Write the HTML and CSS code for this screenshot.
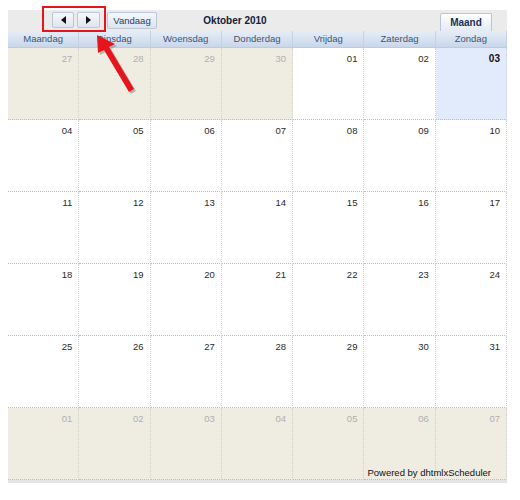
FILE: index.html
```html
<!DOCTYPE html>
<html>
<head>
<meta charset="utf-8">
<link rel="stylesheet" href="styles.css">
</head>
<body>
<div class="scheduler">
  <div class="navline">
    <div class="nav-btn prev"><span class="tri tri-left"></span></div>
    <div class="nav-btn next"><span class="tri tri-right"></span></div>
    <div class="today-btn">Vandaag</div>
    <div class="cal-date">Oktober 2010</div>
    <div class="tab">Maand</div>
  </div>
  <div class="header">
    <div class="hcell">Maandag</div>
    <div class="hcell">Dinsdag</div>
    <div class="hcell">Woensdag</div>
    <div class="hcell">Donderdag</div>
    <div class="hcell">Vrijdag</div>
    <div class="hcell">Zaterdag</div>
    <div class="hcell">Zondag</div>
  </div>
  <div class="month">
    <div class="cell other">27</div>
    <div class="cell other">28</div>
    <div class="cell other">29</div>
    <div class="cell other">30</div>
    <div class="cell">01</div>
    <div class="cell">02</div>
    <div class="cell now">03</div>

    <div class="cell">04</div>
    <div class="cell">05</div>
    <div class="cell">06</div>
    <div class="cell">07</div>
    <div class="cell">08</div>
    <div class="cell">09</div>
    <div class="cell">10</div>

    <div class="cell">11</div>
    <div class="cell">12</div>
    <div class="cell">13</div>
    <div class="cell">14</div>
    <div class="cell">15</div>
    <div class="cell">16</div>
    <div class="cell">17</div>

    <div class="cell">18</div>
    <div class="cell">19</div>
    <div class="cell">20</div>
    <div class="cell">21</div>
    <div class="cell">22</div>
    <div class="cell">23</div>
    <div class="cell">24</div>

    <div class="cell">25</div>
    <div class="cell">26</div>
    <div class="cell">27</div>
    <div class="cell">28</div>
    <div class="cell">29</div>
    <div class="cell">30</div>
    <div class="cell">31</div>

    <div class="cell other">01</div>
    <div class="cell other">02</div>
    <div class="cell other">03</div>
    <div class="cell other">04</div>
    <div class="cell other">05</div>
    <div class="cell other">06</div>
    <div class="cell other">07</div>
  </div>
  <div class="bottom-strip"></div>
  <div class="powered">Powered by dhtmlxScheduler</div>

  <div class="highlight-box"></div>
  <svg class="arrow" width="60" height="80" viewBox="0 0 60 80">
    <g transform="translate(2,2)" fill="#8a8a8a" opacity="0.55">
      <polygon points="6,1 24,10 18,13 43,55 38,58 13,16 7,19"/>
    </g>
    <polygon fill="#e8141b" points="6,1 24,10 18,13 43,55 38,58 13,16 7,19"/>
  </svg>
</div>
</body>
</html>
```

FILE: styles.css
```css
html, body {
  margin: 0;
  padding: 0;
  background: #ffffff;
}

body {
  padding: 10px 0 0 8px;
  font-family: "Liberation Sans", Arial, sans-serif;
  font-size: 9.5px;
}

.scheduler {
  position: relative;
  width: 499px;
}

.navline {
  display: flex;
  align-items: flex-start;
  height: 21px;
  background: #ebebeb;
  padding-left: 44px;
  box-sizing: border-box;
}

.nav-btn {
  display: flex;
  align-items: center;
  justify-content: center;
  box-sizing: border-box;
  height: 16px;
  margin-top: 2px;
  border: 1px solid #b9c7d9;
  border-radius: 2px;
  background: linear-gradient(#f6f8fb, #dde5ef);
}

.prev {
  width: 22px;
}

.next {
  width: 23px;
  margin-left: 3px;
}

.tri {
  width: 0;
  height: 0;
  border-top: 4px solid transparent;
  border-bottom: 4px solid transparent;
}

.tri-left {
  border-right: 5px solid #111;
}

.tri-right {
  border-left: 5px solid #111;
}

.today-btn {
  box-sizing: border-box;
  width: 50px;
  height: 17px;
  margin-top: 2px;
  margin-left: 7px;
  border: 1px solid #b9c7d9;
  border-radius: 2px;
  background: linear-gradient(#f6f8fb, #dbe4ef);
  color: #1f3d66;
  text-align: center;
  line-height: 15px;
  font-size: 9.5px;
}

.cal-date {
  width: 156px;
  text-align: center;
  font-weight: bold;
  font-size: 10px;
  color: #0f2140;
  line-height: 21px;
}

.tab {
  box-sizing: border-box;
  width: 52px;
  height: 18px;
  margin-top: 3px;
  margin-left: auto;
  margin-right: 15px;
  border: 1px solid #b6c5d8;
  border-bottom: none;
  border-radius: 2px 2px 0 0;
  background: linear-gradient(#ffffff, #e4ebf5);
  color: #16325c;
  font-weight: bold;
  font-size: 10px;
  text-align: center;
  line-height: 17px;
}

.header {
  display: grid;
  grid-template-columns: repeat(7, 1fr);
  height: 17px;
  background: linear-gradient(#e6edf7, #c9d7ea);
  border-bottom: 1px solid #bccbdd;
  box-sizing: border-box;
}

.hcell {
  text-align: center;
  line-height: 16px;
  color: #3b5677;
  border-right: 1px solid #c3d1e2;
}

.month {
  display: grid;
  grid-template-columns: repeat(7, 1fr);
  grid-auto-rows: 72px;
}

.cell {
  box-sizing: border-box;
  border-right: 1px dotted #c4d1e0;
  border-bottom: 1px dotted #aebdd0;
  padding: 5px 6px 0 0;
  text-align: right;
  color: #2a2a2a;
  background: #ffffff;
}

.cell.other {
  background: #efece1;
  color: #b0b0b0;
}

.cell.now {
  background: #e2ebfc;
  font-weight: bold;
  font-size: 10px;
  color: #111;
}

.bottom-strip {
  height: 3px;
  background: #e4e4e4;
}

.powered {
  position: absolute;
  right: 16px;
  bottom: 5px;
  color: #111;
  font-size: 9.5px;
}

.highlight-box {
  position: absolute;
  left: 34px;
  top: -4px;
  width: 60px;
  height: 22px;
  border: 2px solid #e8141b;
}

.arrow {
  position: absolute;
  left: 83px;
  top: 24px;
}
```
